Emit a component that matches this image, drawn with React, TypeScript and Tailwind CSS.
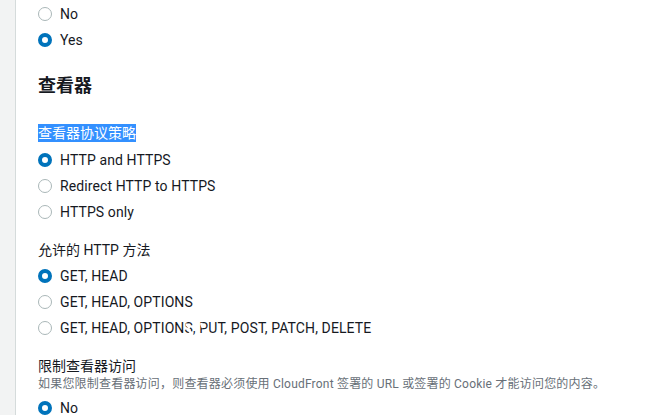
import React from "react";

function Radio({ checked, label }: { checked?: boolean; label: string }) {
  return (
    <div className="flex h-[26px] items-center">
      <span
        className={
          checked
            ? "box-border h-[14px] w-[14px] shrink-0 rounded-full border-[4px] border-[#0073bb] bg-white"
            : "box-border h-[14px] w-[14px] shrink-0 rounded-full border-[1.5px] border-[#aab7b8] bg-white"
        }
      />
      <span className="ml-[8px] text-[14px] tracking-[0.1px] text-[#16191f]">{label}</span>
    </div>
  );
}

export default function App() {
  return (
    <div className="flex h-[415px] w-[648px] overflow-hidden bg-white font-[Roboto,'Noto_Sans_CJK_SC',sans-serif]">
      <div className="w-[16px] shrink-0 border-r border-[#d5dbdb] bg-[#f2f3f3]" />
      <div className="pl-[22px] pt-[1px]">
        <Radio label="No" />
        <Radio checked label="Yes" />

        <h2 className="mt-[19px] text-[18px] font-bold leading-[28px] text-[#16191f]">查看器</h2>

        <div className="mt-[22px] text-[14px] leading-[22px]">
          <span className="bg-[#3390ff] py-[1px] text-white">查看器协议策略</span>
        </div>
        <div className="mt-[3px]">
          <Radio checked label="HTTP and HTTPS" />
          <Radio label="Redirect HTTP to HTTPS" />
          <Radio label="HTTPS only" />
        </div>

        <div className="mt-[14px] text-[14px] leading-[22px] text-[#16191f]">允许的 HTTP 方法</div>
        <div className="mt-[2px]">
          <Radio checked label="GET, HEAD" />
          <Radio label="GET, HEAD, OPTIONS" />
          <div className="relative">
            <Radio label="GET, HEAD, OPTIONS, PUT, POST, PATCH, DELETE" />
            <svg className="absolute left-[146px] top-[5px]" width="24" height="16" viewBox="0 0 24 16">
              <path d="M2 4 L6 8 M5 11 L9 14 M13 4 L14 12 M17 3 L19 8" stroke="#fff" strokeWidth="2.5" />
            </svg>
          </div>
        </div>

        <div className="mt-[15px] text-[14px] leading-[20px] text-[#16191f]">限制查看器访问</div>
        <div className="text-[12px] leading-[16px] tracking-[0.2px] text-[#687078]">
          如果您限制查看器访问，则查看器必须使用 CloudFront 签署的 URL 或签署的 Cookie 才能访问您的内容。
        </div>
        <div className="mt-[3px]">
          <Radio checked label="No" />
        </div>
      </div>
    </div>
  );
}
